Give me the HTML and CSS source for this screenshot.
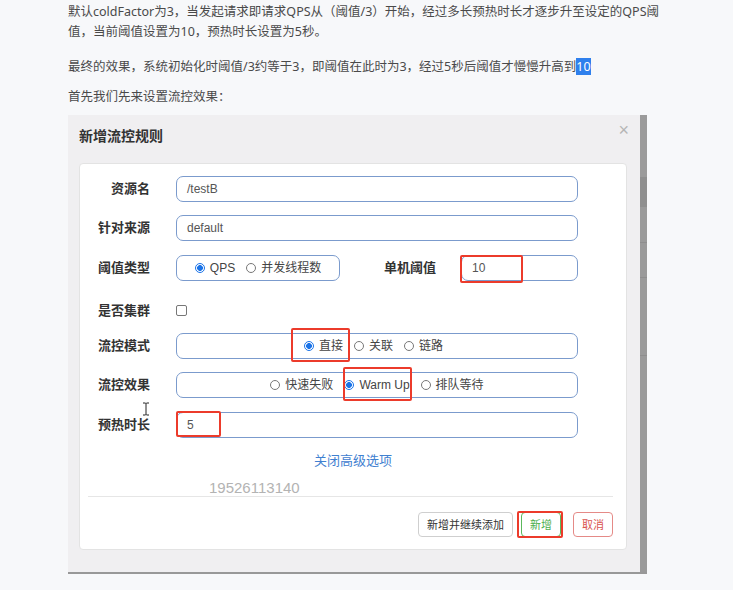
FILE: index.html
```html
<!DOCTYPE html>
<html lang="zh-CN">
<head>
    <meta charset="UTF-8">
    <title>流控效果 Warm Up</title>
    <link rel="stylesheet" href="styles.css">
</head>
<body>
    <!-- Article text -->
    <div class="article">
        <p>默认coldFactor为3，当发起请求即请求QPS从（阈值/3）开始，经过多长预热时长才逐步升至设定的QPS阈值，当前阈值设置为10，预热时长设置为5秒。</p>
        <p class="mid">最终的效果，系统初始化时阈值/3约等于3，即阈值在此时为3，经过5秒后阈值才慢慢升高到<span class="hl">10</span></p>
        <p class="last">首先我们先来设置流控效果：</p>
    </div>

    <!-- Screenshot of the dialog -->
    <div class="shot">
        <div class="dialog">
            <div class="dialog-head">
                <h3>新增流控规则</h3>
                <span class="close">×</span>
            </div>
            <div class="panel">
                <div class="form">
                    <label>资源名</label>
                    <div class="input">/testB</div>

                    <label>针对来源</label>
                    <div class="input">default</div>

                    <label>阈值类型</label>
                    <div class="split">
                        <div class="box box-type">
                            <span class="opt"><i class="radio on"></i>QPS</span>
                            <span class="opt"><i class="radio"></i>并发线程数</span>
                        </div>
                        <label class="sub">单机阈值</label>
                        <div class="input grow mark mark-ten">10</div>
                    </div>

                    <label class="low">是否集群</label>
                    <div class="check-row low"><i class="check"></i></div>

                    <label>流控模式</label>
                    <div class="box box-mode">
                        <span class="opt mark mark-direct"><i class="radio on"></i>直接</span>
                        <span class="opt"><i class="radio"></i>关联</span>
                        <span class="opt"><i class="radio"></i>链路</span>
                    </div>

                    <label>流控效果</label>
                    <div class="box">
                        <span class="opt"><i class="radio"></i>快速失败</span>
                        <span class="opt mark mark-warm"><i class="radio on"></i>Warm Up</span>
                        <span class="opt"><i class="radio"></i>排队等待</span>
                    </div>

                    <label>预热时长</label>
                    <div class="input mark mark-five">5</div>
                </div>

                <div class="more">关闭高级选项</div>

                <div class="footer">
                    <button class="btn">新增并继续添加</button>
                    <button class="btn btn-ok mark mark-ok">新增</button>
                    <button class="btn btn-cancel">取消</button>
                </div>

                <span class="watermark">19526113140</span>
                <svg class="ibeam" width="10" height="14" viewBox="0 0 10 14">
                    <path d="M2 1h2.5l0.5 0.6 0.5-0.6H8M5 1.6v10.8M2 13h2.5l0.5-0.6 0.5 0.6H8" fill="none" stroke="#222" stroke-width="1"/>
                </svg>
            </div>
        </div>
        <div class="strip"></div>
    </div>
</body>
</html>
```

FILE: styles.css
```css
body {
    margin: 0;
    padding: 2px 0 0;
    background: #f7f8fa;
    font-family: "Noto Sans", "Noto Sans CJK SC", sans-serif;
    color: #4a4a4a;
}

/* article */

.article {
    padding-left: 68px;
    width: 600px;
    font-size: 12.5px;
    line-height: 20px;
}

.article p {
    margin: 0 0 15px;
}

.article p.mid {
    margin-bottom: 10px;
}

.article p.last {
    margin-bottom: 8px;
}

.hl {
    background: #2f80ed;
    color: white;
}

/* dialog screenshot */

.shot {
    margin-left: 68px;
    width: 579px;
    display: flex;
    border-bottom: 2px solid #989898;
}

.strip {
    width: 7px;
    background: linear-gradient(to bottom,
        #9b9b9b 0 62px, #8f8f8f 62px 92px, #9a9a9a 92px 127px,
        #8e8e8e 127px 128px, #9a9a9a 128px 162px, #8e8e8e 162px 163px,
        #9a9a9a 163px 240px, #8e8e8e 240px 241px, #9a9a9a 241px);
}

.dialog {
    flex: 1;
    background: #f0eff1;
    padding: 9px 13px 22px 11px;
    font-family: "Liberation Sans", "Noto Sans CJK SC", sans-serif;
}

.dialog-head {
    display: flex;
    justify-content: space-between;
    height: 39px;
}

.dialog-head h3 {
    margin: 0;
    padding-top: 1px;
    font-size: 14px;
    line-height: 22px;
    color: #333;
}

.close {
    color: #b5b5b5;
    font-size: 18px;
    line-height: 18px;
    margin: -3px -2px 0 0;
}

.panel {
    position: relative;
    background: white;
    border: 1px solid #e3e3e3;
    border-radius: 4px;
    padding: 12px 13px 12px 8px;
}

.form {
    display: grid;
    grid-template-columns: 62px 1fr;
    column-gap: 26px;
    row-gap: 13.3px;
    margin-right: 35px;
}

.form label {
    font-size: 13px;
    font-weight: bold;
    color: #333;
    text-align: right;
    line-height: 26px;
}

.form .low {
    margin: 4px 0 -4px;
}

.input {
    height: 26px;
    box-sizing: border-box;
    border: 1px solid #7b9bcd;
    border-radius: 7px;
    padding-left: 10px;
    font-size: 12px;
    line-height: 24px;
    color: #555;
}

.split {
    display: flex;
    align-items: center;
}

.split .sub {
    margin: 0 25px 0 44px;
}

.grow {
    flex: 1;
}

.box {
    height: 26px;
    box-sizing: border-box;
    border: 1px solid #7b9bcd;
    border-radius: 7px;
    display: flex;
    justify-content: center;
    align-items: center;
    gap: 11px;
    font-size: 12px;
    color: #444;
}

.box-type {
    width: 164px;
}

.box-mode {
    padding-right: 7px;
}

.opt {
    display: inline-flex;
    align-items: center;
    line-height: 16px;
}

.radio {
    width: 8px;
    height: 8px;
    border: 1px solid #777;
    border-radius: 50%;
    margin-right: 5px;
    background: white;
}

.radio.on {
    border-color: #1a73e8;
    background: radial-gradient(circle, #1a73e8 0 2.6px, white 3.2px);
}

.check-row {
    display: flex;
    align-items: center;
}

.check {
    width: 9px;
    height: 9px;
    border: 1px solid #777;
    border-radius: 2px;
}

.more {
    text-align: center;
    color: #3f80d0;
    font-size: 13px;
    line-height: 20px;
    margin-top: 13px;
    padding-left: 5px;
}

.footer {
    border-top: 1px solid #e6e6e6;
    margin-top: 25px;
    padding-top: 15px;
    display: flex;
    justify-content: flex-end;
    gap: 8px;
}

.btn {
    height: 25px;
    padding: 0 8px;
    background: white;
    border: 1px solid #cfcfcf;
    border-radius: 4px;
    font-family: "Liberation Sans", "Noto Sans CJK SC", sans-serif;
    font-size: 11px;
    color: #333;
}

.btn-ok {
    color: #4cae4c;
    border-color: #5cb85c;
}

.btn-cancel {
    color: #d9534f;
    border-color: #e58a87;
    margin-left: 4px;
}

/* red annotation boxes */

.mark {
    position: relative;
}

.mark::after {
    content: "";
    position: absolute;
    border: 2px solid #ec3b2b;
    border-radius: 2px;
}

.mark-ten::after {
    left: -2px;
    top: -1px;
    width: 59px;
    height: 24px;
}

.mark-direct::after {
    left: -13px;
    top: -10px;
    width: 55px;
    height: 30px;
}

.mark-warm::after {
    left: -1px;
    top: -10px;
    width: 65px;
    height: 30px;
}

.mark-five::after {
    left: -1px;
    top: -2px;
    width: 41px;
    height: 22px;
}

.mark-ok::after {
    left: -5px;
    top: -2px;
    width: 42px;
    height: 23px;
}

.watermark {
    position: absolute;
    left: 129px;
    top: 315px;
    font-family: "Liberation Sans", sans-serif;
    font-size: 15px;
    color: #b3b3b3;
}

.ibeam {
    position: absolute;
    left: 61px;
    top: 238px;
}
```
